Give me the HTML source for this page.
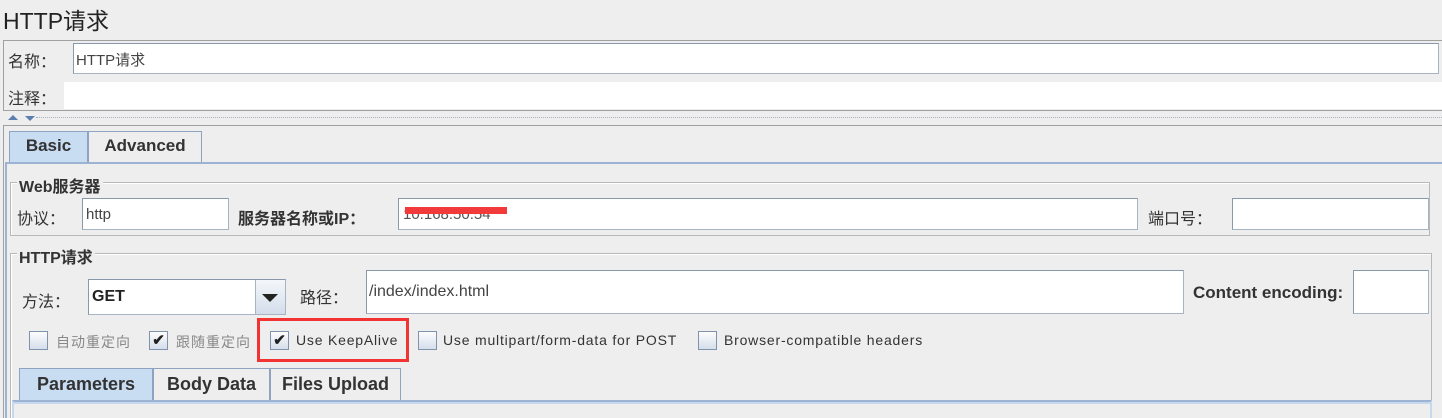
<!DOCTYPE html>
<html><head><meta charset="utf-8"><style>
*{margin:0;padding:0;box-sizing:border-box}
html,body{width:1442px;height:418px;overflow:hidden}
body{background:#eeeeee;position:relative;font-family:"Liberation Sans","Noto Sans CJK SC",sans-serif;color:#333}
.a{position:absolute}
.in{position:absolute;background:#fff;border:1px solid #a8b4c4;border-top-color:#8a98ab;border-left-color:#8a98ab}
.t{position:absolute;font-size:15px;white-space:nowrap}
.b{font-weight:bold}
.cb{position:absolute;width:19px;height:19px;border:1px solid #7f93ad;background:linear-gradient(#fdfdfe,#d5deea);font-size:15px;line-height:17px;text-align:center;color:#222;font-weight:bold}
.grp{position:absolute;border:1px solid #b8b8b8;box-shadow:inset 1px 1px 0 #fff}
.lg{position:absolute;background:#eeeeee;padding:0 2px;font-size:15px;font-weight:bold}
.tab{position:absolute;border:1px solid #8da3c0;border-bottom:none;font-size:17px;font-weight:bold;text-align:center;background:#eeeeee;color:#333}
.ck{position:absolute;font-size:14px;letter-spacing:0.8px;white-space:nowrap}
.ckc{position:absolute;font-size:14px;letter-spacing:1px;color:#888;white-space:nowrap}
</style></head><body>
<div class="t" style="left:3px;top:2px;font-size:23px;color:#222">HTTP请求</div>
<div class="a" style="left:3px;top:40px;width:1439px;height:71px;border:1px solid #a0a0a0;border-right:none"></div>
<div class="t" style="left:8px;top:48px;font-size:16px">名称：</div>
<div class="in" style="left:73px;top:43px;width:1366px;height:31px"></div>
<div class="t" style="left:76px;top:49px;color:#444">HTTP请求</div>
<div class="t" style="left:8px;top:85px;font-size:16px">注释：</div>
<div class="a" style="left:64px;top:82px;width:1378px;height:27px;background:#fff"></div>
<div class="a" style="left:8px;top:115px;width:0;height:0;border-left:5px solid transparent;border-right:5px solid transparent;border-bottom:5px solid #5b7fb0"></div>
<div class="a" style="left:25px;top:116px;width:0;height:0;border-left:5px solid transparent;border-right:5px solid transparent;border-top:5px solid #5b7fb0"></div>
<div class="a" style="left:36px;top:117px;width:1406px;height:3px;border-top:1px dotted #a8b0bc"></div>
<div class="a" style="left:3px;top:125px;width:1439px;height:293px;border:1px solid #a0a0a0;border-right:none;border-bottom:none"></div>
<div class="tab" style="left:9px;top:131px;width:79px;height:32px;background:#c8ddf2;line-height:28px">Basic</div>
<div class="tab" style="left:88px;top:131px;width:114px;height:31px;line-height:28px">Advanced</div>
<div class="a" style="left:5px;top:162px;width:1437px;height:256px;border-top:2px solid #9db3d3;border-left:2px solid #9db3d3"></div>
<div class="grp" style="left:10px;top:182px;width:1420px;height:54px"></div>
<div class="lg" style="left:17px;top:173px;font-size:16px">Web服务器</div>
<div class="t" style="left:17px;top:205px;font-size:16px">协议：</div>
<div class="in" style="left:82px;top:198px;width:147px;height:32px"></div>
<div class="t" style="left:86px;top:206px;color:#444">http</div>
<div class="t" style="left:238px;top:205px;font-weight:bold;font-size:16px">服务器名称或IP：</div>
<div class="in" style="left:398px;top:198px;width:740px;height:32px"></div>
<div class="t" style="left:403px;top:206px;color:#555">10.168.50.54</div>
<div class="a" style="left:405px;top:207px;width:102px;height:7px;background:#f23a3a"></div>
<div class="t" style="left:1148px;top:205px;font-size:16px">端口号：</div>
<div class="in" style="left:1232px;top:198px;width:197px;height:32px"></div>
<div class="grp" style="left:10px;top:253px;width:1422px;height:170px"></div>
<div class="lg" style="left:17px;top:244px;font-size:16px">HTTP请求</div>
<div class="t" style="left:22px;top:288px;font-size:16px">方法：</div>
<div class="in" style="left:88px;top:279px;width:198px;height:36px"></div>
<div class="t b" style="left:92px;top:288px;color:#222;font-size:16px">GET</div>
<div class="a" style="left:255px;top:280px;width:30px;height:34px;border-left:1px solid #a8b4c4;background:linear-gradient(#f4f7fb,#d3ddea)"></div>
<div class="a" style="left:262px;top:294px;width:0;height:0;border-left:8px solid transparent;border-right:8px solid transparent;border-top:8px solid #222"></div>
<div class="t" style="left:300px;top:284px;font-size:16px">路径：</div>
<div class="in" style="left:366px;top:270px;width:818px;height:44px"></div>
<div class="t" style="left:369px;top:283px;font-size:16px;color:#444">/index/index.html</div>
<div class="t b" style="left:1193px;top:283px;font-size:17px">Content encoding:</div>
<div class="in" style="left:1353px;top:270px;width:76px;height:44px"></div>
<div class="cb" style="left:29px;top:331px"></div>
<div class="ckc" style="left:56px;top:332px">自动重定向</div>
<div class="cb" style="left:149px;top:331px">✔</div>
<div class="ckc" style="left:176px;top:332px">跟随重定向</div>
<div class="a" style="left:257px;top:318px;width:152px;height:44px;border:3px solid #f23333"></div>
<div class="cb" style="left:270px;top:331px">✔</div>
<div class="ck" style="left:296px;top:332px">Use KeepAlive</div>
<div class="cb" style="left:418px;top:331px"></div>
<div class="ck" style="left:443px;top:332px">Use multipart/form-data for POST</div>
<div class="cb" style="left:698px;top:331px"></div>
<div class="ck" style="left:724px;top:332px">Browser-compatible headers</div>
<div class="tab" style="left:19px;top:368px;width:134px;height:34px;background:#c8ddf2;line-height:30px;font-size:18px">Parameters</div>
<div class="tab" style="left:153px;top:368px;width:117px;height:33px;line-height:30px;font-size:18px">Body Data</div>
<div class="tab" style="left:270px;top:368px;width:131px;height:33px;line-height:30px;font-size:18px">Files Upload</div>
<div class="a" style="left:12px;top:400px;width:1420px;height:18px;border-top:2px solid #9db3d3;border-left:2px solid #c5d8ee;border-right:2px solid #c5d8ee;box-shadow:inset 0 2px 0 #c5d8ee"></div>
</body></html>
